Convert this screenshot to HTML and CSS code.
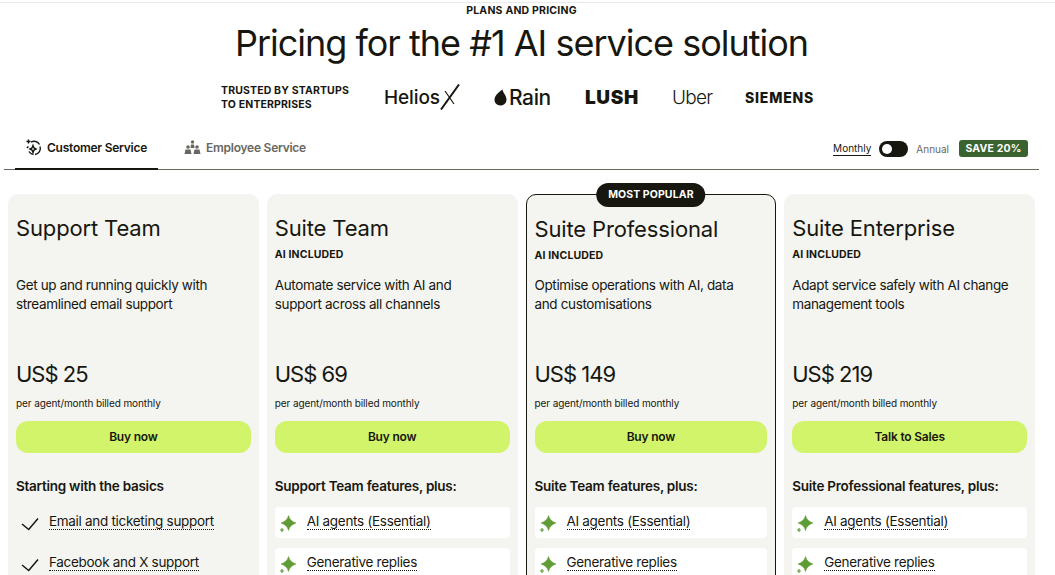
FILE: index.html
```html
<!DOCTYPE html>
<html lang="en">
<head>
<meta charset="utf-8">
<title>Plans and pricing</title>
<link rel="stylesheet" href="styles.css">
</head>
<body>
<div class="page">
  <header class="hero">
    <p class="eyebrow">PLANS AND PRICING</p>
    <h1 class="title">Pricing for the #1 AI service solution</h1>
    <div class="trust">
      <p class="trust-text">TRUSTED BY STARTUPS<br>TO ENTERPRISES</p>
      <div class="logos">
        <span class="logo helios">Helios<svg class="helios-x" width="20" height="26" viewBox="0 0 20 26"><path d="M19 0.500 1 25.500" stroke="#17170f" stroke-width="2" fill="none"/><path d="M5 7 14 20" stroke="#17170f" stroke-width="1.200" fill="none"/></svg></span>
        <span class="logo rain"><svg width="13" height="17" viewBox="0 0 13 17"><path d="M8.500 0.500C9 4 12.500 6.500 12.500 10.500 12.500 14 10 16.500 6.500 16.500 3 16.500 0.500 14 0.500 10.800 0.500 6.500 5 3 8.500 0.500Z" fill="#17170f"/></svg>Rain</span>
        <span class="logo lush">LUSH</span>
        <span class="logo uber">Uber</span>
        <span class="logo siemens">SIEMENS</span>
      </div>
    </div>
  </header>

  <nav class="tabbar">
    <div class="tabs">
      <a class="tab tab-active">
        <svg width="17" height="17" viewBox="0 0 17 17" fill="none" stroke="#17170f" stroke-width="1.400"><path d="M6 3.200A6 6 0 0 1 14.500 5.500"/><path d="M15 7.500A6 6 0 0 1 10 15.500"/><path d="M3.500 7.500 1.800 9M8.500 15.500A6 6 0 0 1 4 12.500"/><path d="M8 6.500 9 9 11 10 9 11 8 13.500 7 11 5 10 7 9Z" fill="#fff"/><path d="M3.500 0.500V4.500M1.500 2.500H5.500"/></svg>
        Customer Service
      </a>
      <a class="tab">
        <svg width="17" height="15" viewBox="0 0 17 15" fill="#68675f"><circle cx="8.500" cy="2" r="1.700"/><path d="M6.500 8 7 4.500H10L10.500 8Z"/><circle cx="4" cy="7" r="1.800"/><path d="M0.500 14 1.500 9.500H6.500L7.500 14Z"/><circle cx="13" cy="7" r="1.800"/><path d="M9.500 14 10.500 9.500H15.500L16.500 14Z"/></svg>
        Employee Service
      </a>
    </div>
    <div class="billing">
      <span class="period period-on">Monthly</span>
      <span class="switch"><span class="knob"></span></span>
      <span class="period">Annual</span>
      <span class="save">SAVE 20%</span>
    </div>
  </nav>

  <main class="plans">
    <section class="plan">
      <h2 class="plan-name">Support Team</h2>
      <p class="ai ai-empty">&nbsp;</p>
      <p class="plan-desc">Get up and running quickly with streamlined email support</p>
      <p class="price">US$ 25</p>
      <p class="per">per agent/month billed monthly</p>
      <a class="buy">Buy now</a>
      <h3 class="feat-head">Starting with the basics</h3>
      <ul class="feats">
        <li class="feat"><svg class="ico" width="19" height="19" viewBox="0 0 19 19"><path d="M2 9 8.700 14.500 18 3.500" fill="none" stroke="#17170f" stroke-width="1.500"/></svg><span class="feat-label">Email and ticketing support</span></li>
        <li class="feat"><svg class="ico" width="19" height="19" viewBox="0 0 19 19"><path d="M2 9 8.700 14.500 18 3.500" fill="none" stroke="#17170f" stroke-width="1.500"/></svg><span class="feat-label">Facebook and X support</span></li>
      </ul>
    </section>

    <section class="plan">
      <h2 class="plan-name">Suite Team</h2>
      <p class="ai">AI INCLUDED</p>
      <p class="plan-desc">Automate service with AI and support across all channels</p>
      <p class="price">US$ 69</p>
      <p class="per">per agent/month billed monthly</p>
      <a class="buy">Buy now</a>
      <h3 class="feat-head">Support Team features, plus:</h3>
      <ul class="feats">
        <li class="feat feat-ai"><svg class="ico" width="19" height="19" viewBox="0 0 19 19"><path class="spark" d="M9.500 0.500C10.500 4.500 13 6.500 17 8 13 9.500 10.500 11.500 9.500 15.500 8.500 11.500 6 9.500 2 8 6 6.500 8.500 4.500 9.500 0.500Z"/><path class="spark-plus" d="M1 15H5M3 13V17"/></svg><span class="feat-label">AI agents (Essential)</span></li>
        <li class="feat feat-ai"><svg class="ico" width="19" height="19" viewBox="0 0 19 19"><path class="spark" d="M9.500 0.500C10.500 4.500 13 6.500 17 8 13 9.500 10.500 11.500 9.500 15.500 8.500 11.500 6 9.500 2 8 6 6.500 8.500 4.500 9.500 0.500Z"/><path class="spark-plus" d="M1 15H5M3 13V17"/></svg><span class="feat-label">Generative replies</span></li>
      </ul>
    </section>

    <section class="plan plan-popular">
      <span class="badge">MOST POPULAR</span>
      <h2 class="plan-name">Suite Professional</h2>
      <p class="ai">AI INCLUDED</p>
      <p class="plan-desc">Optimise operations with AI, data and customisations</p>
      <p class="price">US$ 149</p>
      <p class="per">per agent/month billed monthly</p>
      <a class="buy">Buy now</a>
      <h3 class="feat-head">Suite Team features, plus:</h3>
      <ul class="feats">
        <li class="feat feat-ai"><svg class="ico" width="19" height="19" viewBox="0 0 19 19"><path class="spark" d="M9.500 0.500C10.500 4.500 13 6.500 17 8 13 9.500 10.500 11.500 9.500 15.500 8.500 11.500 6 9.500 2 8 6 6.500 8.500 4.500 9.500 0.500Z"/><path class="spark-plus" d="M1 15H5M3 13V17"/></svg><span class="feat-label">AI agents (Essential)</span></li>
        <li class="feat feat-ai"><svg class="ico" width="19" height="19" viewBox="0 0 19 19"><path class="spark" d="M9.500 0.500C10.500 4.500 13 6.500 17 8 13 9.500 10.500 11.500 9.500 15.500 8.500 11.500 6 9.500 2 8 6 6.500 8.500 4.500 9.500 0.500Z"/><path class="spark-plus" d="M1 15H5M3 13V17"/></svg><span class="feat-label">Generative replies</span></li>
      </ul>
    </section>

    <section class="plan">
      <h2 class="plan-name">Suite Enterprise</h2>
      <p class="ai">AI INCLUDED</p>
      <p class="plan-desc">Adapt service safely with AI change management tools</p>
      <p class="price">US$ 219</p>
      <p class="per">per agent/month billed monthly</p>
      <a class="buy">Talk to Sales</a>
      <h3 class="feat-head">Suite Professional features, plus:</h3>
      <ul class="feats">
        <li class="feat feat-ai"><svg class="ico" width="19" height="19" viewBox="0 0 19 19"><path class="spark" d="M9.500 0.500C10.500 4.500 13 6.500 17 8 13 9.500 10.500 11.500 9.500 15.500 8.500 11.500 6 9.500 2 8 6 6.500 8.500 4.500 9.500 0.500Z"/><path class="spark-plus" d="M1 15H5M3 13V17"/></svg><span class="feat-label">AI agents (Essential)</span></li>
        <li class="feat feat-ai"><svg class="ico" width="19" height="19" viewBox="0 0 19 19"><path class="spark" d="M9.500 0.500C10.500 4.500 13 6.500 17 8 13 9.500 10.500 11.500 9.500 15.500 8.500 11.500 6 9.500 2 8 6 6.500 8.500 4.500 9.500 0.500Z"/><path class="spark-plus" d="M1 15H5M3 13V17"/></svg><span class="feat-label">Generative replies</span></li>
      </ul>
    </section>
  </main>
</div>
</body>
</html>
```
FILE: styles.css
```css
* { box-sizing: border-box; }
html, body { margin: 0; padding: 0; height: 575px; overflow: hidden; background: #fff; }
body { font-family: Inter, "Liberation Sans", sans-serif; color: #17170f; }
p, h1, h2, h3, ul { margin: 0; padding: 0; }
ul { list-style: none; }

.page { border-top: 1px solid #e9e9e9; margin-top: 2px; height: 573px; overflow: hidden; }

.hero { display: flex; flex-direction: column; align-items: center; width: 1043px; }
.eyebrow { font-size: 10.500px; font-weight: 700; line-height: 14px; margin-top: 1px; letter-spacing: 0.2px; }
.title { font-size: 36px; font-weight: 400; line-height: 44px; margin-top: 3px; letter-spacing: -1px; }
.trust { display: flex; align-items: center; margin-top: 10px; width: 601px; height: 44px; }
.trust-text { font-size: 10.500px; font-weight: 700; line-height: 14px; width: 163px; letter-spacing: 0.15px; padding-top: 1px; }
.logos { display: flex; align-items: center; }
.logo { display: inline-flex; align-items: center; color: #17170f; }
.helios { font-size: 19px; font-weight: 500; width: 110px; letter-spacing: -0.1px; }
.rain { font-size: 21px; font-weight: 500; width: 91px; gap: 2px; letter-spacing: -0.4px; }
.lush { font-size: 19px; font-weight: 900; width: 87px; letter-spacing: 0.6px; }
.uber { font-size: 19px; font-weight: 300; width: 73px; letter-spacing: -0.7px; }
.siemens { font-size: 14px; font-weight: 800; letter-spacing: 0.8px; }

.tabbar { display: flex; justify-content: space-between; align-items: stretch; margin: 13px 16px 0 4px; height: 38px; border-bottom: 1px solid #68675f; }
.tabs { display: flex; margin-left: 11px; }
.tab { display: flex; align-items: center; gap: 5px; height: 38px; padding: 0 10px 8px; margin-right: 16px; font-size: 12px; font-weight: 600; letter-spacing: -0.25px; color: #68675f; white-space: nowrap; }
.tab-active { color: #17170f; border-bottom: 2px solid #17170f; width: 143px; padding-bottom: 6px; }
.billing { display: flex; align-items: center; margin-right: 11px; padding-bottom: 4px; }
.period { font-size: 10px; color: #68675f; }
.period-on { color: #17170f; border-bottom: 1px solid #17170f; line-height: 13px; }
.switch { display: flex; align-items: center; width: 29px; height: 16px; border-radius: 8px; background: #17170f; margin: 0 8px; padding-left: 3px; }
.knob { width: 10px; height: 10px; border-radius: 50%; background: #fff; }
.save { font-size: 10.500px; font-weight: 700; color: #fff; background: #3a632f; border-radius: 3px; padding: 2px 6.500px; line-height: 13px; margin-left: 10px; letter-spacing: 0.15px; }

.plans { display: grid; grid-template-columns: repeat(4, 1fr); gap: 8px; margin: 24px 20px 0 8px; align-items: start; }
.plan { position: relative; background: #f4f4f1; border-radius: 10px; padding: 20px 8px 12px; height: 500px; }
.plan-popular { border: 1px solid #17170f; }
.plan-popular .plan-desc { margin-top: 13px; }
.badge { position: absolute; top: -12px; left: 50%; transform: translateX(-50%); background: #17170f; color: #fff; font-size: 10.500px; font-weight: 700; line-height: 24px; border-radius: 12px; padding: 0 12px; white-space: nowrap; letter-spacing: 0.1px; }
.plan-name { font-size: 22px; font-weight: 400; line-height: 28px; letter-spacing: -0.15px; }
.ai { font-size: 10.500px; font-weight: 700; line-height: 14px; margin-top: 6px; letter-spacing: 0.15px; }
.plan-desc { font-size: 13.500px; line-height: 19px; margin-top: 14px; height: 85px; letter-spacing: -0.36px; padding-right: 14px; }
.price { font-size: 22px; line-height: 26px; letter-spacing: -1px; }
.per { font-size: 10px; line-height: 14px; margin-top: 9px; letter-spacing: -0.1px; }
.buy { display: flex; align-items: center; justify-content: center; height: 32px; padding-bottom: 2px; border-radius: 12px; background: #d1f46a; font-size: 12px; font-weight: 600; margin-top: 11px; letter-spacing: -0.2px; }
.feat-head { font-size: 13.500px; font-weight: 600; line-height: 18px; margin-top: 24px; letter-spacing: -0.25px; }
.feats { display: flex; flex-direction: column; gap: 10px; margin-top: 12px; }
.feat { display: flex; align-items: center; gap: 9px; height: 31px; padding: 0 0 2px 4px; font-size: 13.500px; letter-spacing: -0.3px; }
.feat:not(.feat-ai) { gap: 10px; }
.feat-ai { background: #fff; border-radius: 4px; }
.ico { flex: none; margin-top: 5px; }
.spark { fill: #5f9c35; stroke: #5f9c35; stroke-width: 0.500; }
.spark-plus { fill: none; stroke: #5f9c35; stroke-width: 1.200; }
.feat-label { border-bottom: 1px dotted #17170f; line-height: 16px; }
```
